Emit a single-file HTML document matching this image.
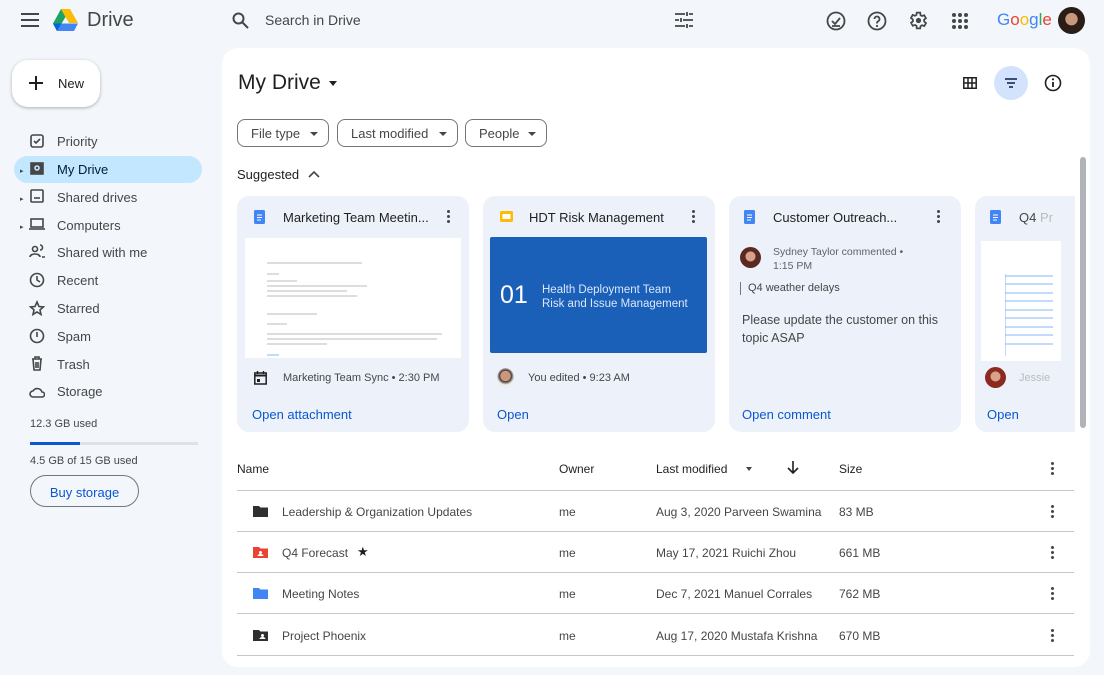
<!DOCTYPE html>
<html><head><meta charset="utf-8"><style>
*{box-sizing:border-box;margin:0;padding:0}
body{width:1104px;height:675px;background:#f3f6fb;font-family:"Liberation Sans",Arial,sans-serif;color:#1f1f1f;position:relative;overflow:hidden}
.a{position:absolute;white-space:nowrap}
.ic{position:absolute}
.nav{font-size:13px;color:#444746}
.card{position:absolute;top:196px;width:232px;height:236px;background:#edf2fa;border-radius:12px}
.ct{position:absolute;left:46px;top:14px;font-size:13px;color:#1f1f1f}
.lnk{position:absolute;left:15px;top:211px;font-size:13px;color:#0b57d0}
.row{position:absolute;left:237px;width:837px;height:41px;border-bottom:1px solid #c4c7c5;font-size:12px;color:#444746}
.row span{position:absolute;top:14px}
.chip{position:absolute;top:119px;height:28px;border:1px solid #747775;border-radius:8px;font-size:13px;color:#444746;padding:6px 0 0 13px}
.chip:after{content:"";position:absolute;right:10px;top:12px;border:4px solid transparent;border-top:4px solid #444746}
.k{position:absolute;width:3px;height:3px;background:#444746;border-radius:50%;box-shadow:0 5px 0 #444746,0 10px 0 #444746}
</style></head><body>
<!-- header -->
<svg class="ic" style="left:21px;top:13px" width="18" height="14"><path d="M0 1h18M0 7h18M0 13h18" stroke="#444746" stroke-width="2"/></svg>
<svg class="ic" style="left:53px;top:9px" width="25" height="22" viewBox="0 0 25 22"><path d="M8 0h9l8 14h-9z" fill="#fbbc04"/><path d="M8 0l4.5 8L4 22 0 14.5z" fill="#1ea362"/><path d="M4 22l4.3-7.5H25L21 22z" fill="#4285f4"/><path d="M0 14.5l4 7.5 4.3-7.5z" fill="#0066da"/><path d="M17 0l8 14h-8.5z" fill="#ea4335" opacity=".0"/></svg>
<div class="a" style="left:87px;top:9px;font-size:20px;color:#444746">Drive</div>
<svg class="ic" style="left:232px;top:12px" width="17" height="17"><circle cx="6.5" cy="6.5" r="5" fill="none" stroke="#444746" stroke-width="2"/><path d="M10 10l6 6" stroke="#444746" stroke-width="2"/></svg>
<div class="a" style="left:265px;top:12px;font-size:14px;color:#444746">Search in Drive</div>
<svg class="ic" style="left:675px;top:12px" width="18" height="16"><path d="M0 2h10M14 2h4M0 8h4M8 8h10M0 14h10M14 14h4M12 0v4M6 6v4M12 12v4" stroke="#444746" stroke-width="1.8"/></svg>
<svg class="ic" style="left:826px;top:11px" width="20" height="20"><circle cx="10" cy="10" r="8.5" fill="none" stroke="#444746" stroke-width="1.8"/><path d="M6 10l3 3 5-6M6 15h8" stroke="#444746" stroke-width="1.8" fill="none"/></svg>
<svg class="ic" style="left:867px;top:11px" width="20" height="20"><circle cx="10" cy="10" r="8.5" fill="none" stroke="#444746" stroke-width="1.8"/><path d="M7.5 8a2.5 2.5 0 1 1 3.5 2.3c-1 .5-1 1-1 2.2" stroke="#444746" stroke-width="1.8" fill="none"/><circle cx="10" cy="15" r="1.1" fill="#444746"/></svg>
<svg class="ic" style="left:908px;top:10px" width="21" height="21" viewBox="0 0 24 24"><path d="M19.4 13a7.5 7.5 0 000-2l2.1-1.6-2-3.5-2.5 1a7 7 0 00-1.7-1L15 3h-4l-.4 2.6a7 7 0 00-1.7 1l-2.5-1-2 3.5L6.6 11a7.5 7.5 0 000 2l-2.1 1.6 2 3.5 2.5-1a7 7 0 001.7 1L11 21h4l.4-2.6a7 7 0 001.7-1l2.5 1 2-3.5z" fill="none" stroke="#444746" stroke-width="2" transform="translate(-1 0)"/><circle cx="12" cy="12" r="3" fill="#444746"/></svg>
<svg class="ic" style="left:952px;top:13px" width="16" height="16"><g fill="#444746"><circle cx="2" cy="2" r="2"/><circle cx="8" cy="2" r="2"/><circle cx="14" cy="2" r="2"/><circle cx="2" cy="8" r="2"/><circle cx="8" cy="8" r="2"/><circle cx="14" cy="8" r="2"/><circle cx="2" cy="14" r="2"/><circle cx="8" cy="14" r="2"/><circle cx="14" cy="14" r="2"/></g></svg>
<div class="a" style="left:997px;top:10px;font-size:17px"><span style="color:#4285f4">G</span><span style="color:#ea4335">o</span><span style="color:#fbbc04">o</span><span style="color:#4285f4">g</span><span style="color:#34a853">l</span><span style="color:#ea4335">e</span></div>
<div class="a" style="left:1058px;top:7px;width:27px;height:27px;border-radius:50%;background:radial-gradient(circle at 50% 45%,#c9977b 0 30%,#2a1c17 32%)"></div>
<!-- sidebar -->
<div class="a" style="left:12px;top:60px;width:88px;height:47px;background:#fff;border-radius:16px;box-shadow:0 1px 3px rgba(0,0,0,.3)"></div>
<svg class="ic" style="left:29px;top:76px" width="14" height="14"><path d="M7 0v14M0 7h14" stroke="#1f1f1f" stroke-width="2"/></svg>
<div class="a" style="left:58px;top:76px;font-size:13px;color:#1f1f1f">New</div>
<div class="a" style="left:14px;top:156px;width:188px;height:27px;background:#c2e7ff;border-radius:14px"></div>
<svg class="ic" style="left:29px;top:133px" width="16" height="280" fill="none" stroke="#444746" stroke-width="1.6">
<rect x="2" y="2" width="12" height="12" rx="2"/><path d="M5 8l2 2 4-4"/>
<rect x="2" y="30" width="12" height="11" fill="#444746"/><circle cx="8" cy="35" r="2" stroke="#c2e7ff"/>
<rect x="2" y="57" width="12" height="12" rx="1"/><path d="M5 65h6"/>
<rect x="2" y="86" width="12" height="8"/><path d="M0 96h16"/>
<circle cx="6" cy="116" r="2.5"/><path d="M1 124c0-4 10-4 10 0M11 112a2 2 0 010 5M13 124h3"/>
<circle cx="8" cy="147" r="6.5"/><path d="M8 143v4l3 2"/>
<path d="M8 169l2 4.5 4.5.4-3.5 3 1 4.6L8 179l-4 2.5 1-4.6-3.5-3 4.5-.4z"/>
<circle cx="8" cy="203" r="6.5"/><path d="M8 199v5"/>
<path d="M3 226h10M6 226v-2h4v2M4 226l1 11h6l1-11M7 229v6M9 229v6"/>
<path d="M4 264a3 3 0 010-6 5 5 0 019 1 2.5 2.5 0 010 5z"/>
</svg>
<div class="a" style="left:20px;top:167px;font-size:7px;color:#444746">▸</div>
<div class="a" style="left:20px;top:195px;font-size:7px;color:#444746">▸</div>
<div class="a" style="left:20px;top:223px;font-size:7px;color:#444746">▸</div>
<div class="a nav" style="left:57px;top:134px">Priority</div>
<div class="a nav" style="left:57px;top:162px;color:#001d35">My Drive</div>
<div class="a nav" style="left:57px;top:190px">Shared drives</div>
<div class="a nav" style="left:57px;top:218px">Computers</div>
<div class="a nav" style="left:57px;top:245px">Shared with me</div>
<div class="a nav" style="left:57px;top:273px">Recent</div>
<div class="a nav" style="left:57px;top:301px">Starred</div>
<div class="a nav" style="left:57px;top:329px">Spam</div>
<div class="a nav" style="left:57px;top:357px">Trash</div>
<div class="a nav" style="left:57px;top:384px">Storage</div>
<div class="a" style="left:30px;top:418px;font-size:11px;color:#444746">12.3 GB used</div>
<div class="a" style="left:30px;top:442px;width:168px;height:3px;background:#dde3ea"></div>
<div class="a" style="left:30px;top:442px;width:50px;height:3px;background:#0b57d0"></div>
<div class="a" style="left:30px;top:455px;font-size:11px;color:#444746">4.5 GB of 15 GB used</div>
<div class="a" style="left:30px;top:475px;width:109px;height:32px;border:1px solid #747775;border-radius:16px;font-size:13px;color:#0b57d0;text-align:center;padding-top:9px">Buy storage</div>
<!-- main panel -->
<div class="a" style="left:222px;top:48px;width:868px;height:619px;background:#fff;border-radius:16px"></div>
<div class="a" style="left:238px;top:71px;font-size:21px;color:#1f1f1f">My Drive</div>
<div class="a" style="left:329px;top:81px;border:4px solid transparent;border-top:5px solid #1f1f1f"></div>
<svg class="ic" style="left:963px;top:77px" width="14" height="12"><path d="M.8.8h12.4v10.4H.8zM.8 6h12.4M5 .8v10.4M9 .8v10.4" stroke="#1f1f1f" stroke-width="1.5" fill="none"/></svg>
<div class="a" style="left:994px;top:66px;width:34px;height:34px;border-radius:50%;background:#d3e3fd"></div>
<svg class="ic" style="left:1005px;top:78px" width="12" height="10"><path d="M0 1h12M2 5h8M4 9h4" stroke="#041e49" stroke-width="1.6"/></svg>
<svg class="ic" style="left:1044px;top:74px" width="18" height="18"><circle cx="9" cy="9" r="7.5" fill="none" stroke="#1f1f1f" stroke-width="1.6"/><path d="M9 8v5" stroke="#1f1f1f" stroke-width="1.8"/><circle cx="9" cy="5.3" r="1.1" fill="#1f1f1f"/></svg>
<div class="chip" style="left:237px;width:92px">File type</div>
<div class="chip" style="left:337px;width:121px">Last modified</div>
<div class="chip" style="left:465px;width:82px">People</div>
<div class="a" style="left:237px;top:167px;font-size:13px;color:#1f1f1f">Suggested</div>
<svg class="ic" style="left:308px;top:170px" width="12" height="8"><path d="M1 7l5-5 5 5" stroke="#444746" stroke-width="1.6" fill="none"/></svg>
<!-- cards -->
<div class="card" style="left:237px">
<svg class="ic" style="left:17px;top:14px" width="11" height="14"><rect width="11" height="14" rx="1.5" fill="#4285f4"/><path d="M3 5h5M3 7.5h5M3 10h4" stroke="#fff" stroke-width="1"/></svg>
<div class="ct">Marketing Team Meetin...</div><div class="k" style="left:210px;top:14px"></div>
<div class="a" style="left:8px;top:42px;width:216px;height:120px;background:#fff"></div>
<svg class="ic" style="left:30px;top:65px" width="175" height="95"><g stroke="#bbb" stroke-width="1"><path d="M0 2h95M0 13h12M0 20h30M0 25h100M0 30h80M0 35h90M0 53h50M0 63h20M0 73h175M0 78h170M0 83h60"/><path d="M0 94h12" stroke="#8ab4f8"/></g></svg>
<svg class="ic" style="left:17px;top:175px" width="13" height="14"><rect x=".8" y="2" width="11.4" height="11" fill="none" stroke="#1f1f1f" stroke-width="1.5"/><path d="M.8 4.5h11.4" stroke="#1f1f1f" stroke-width="2"/><path d="M3.5 0v3M9.5 0v3" stroke="#1f1f1f" stroke-width="1.4"/><rect x="3" y="8" width="3" height="3" fill="#1f1f1f"/></svg>
<div class="a" style="left:46px;top:176px;font-size:11px;color:#444746">Marketing Team Sync • 2:30 PM</div>
<div class="lnk">Open attachment</div></div>
<div class="card" style="left:483px">
<svg class="ic" style="left:17px;top:15px" width="13" height="11"><rect width="13" height="11" rx="1.5" fill="#fbbc04"/><rect x="2.5" y="3" width="8" height="5" fill="#fff"/></svg>
<div class="ct">HDT Risk Management</div><div class="k" style="left:209px;top:14px"></div>
<div class="a" style="left:7px;top:41px;width:217px;height:116px;background:#1a5fb8;border-radius:2px;overflow:hidden"><div class="a" style="left:10px;top:44px;font-size:25px;color:#fff">01</div><div class="a" style="left:52px;top:46px;font-size:11.5px;color:#dbe7fb;line-height:14px">Health Deployment Team<br>Risk and Issue Management</div></div>
<div class="a" style="left:14px;top:172px;width:17px;height:20px;border-radius:50%;background:radial-gradient(circle at 50% 40%,#c9977b 0 35%,#3a2a22 37%,#eee 60%)"></div>
<div class="a" style="left:45px;top:176px;font-size:11px;color:#444746">You edited • 9:23 AM</div>
<div class="lnk" style="left:14px">Open</div></div>
<div class="card" style="left:729px">
<svg class="ic" style="left:15px;top:14px" width="11" height="14"><rect width="11" height="14" rx="1.5" fill="#4285f4"/><path d="M3 5h5M3 7.5h5M3 10h4" stroke="#fff" stroke-width="1"/></svg>
<div class="ct" style="left:44px">Customer Outreach...</div><div class="k" style="left:208px;top:14px"></div>
<div class="a" style="left:11px;top:51px;width:21px;height:21px;border-radius:50%;background:radial-gradient(circle at 50% 45%,#d9a08a 0 30%,#5a2a20 34%)"></div>
<div class="a" style="left:44px;top:49px;font-size:10.5px;color:#5f6368;line-height:14px">Sydney Taylor commented •<br>1:15 PM</div>
<div class="a" style="left:11px;top:86px;width:1px;height:13px;background:#747775"></div>
<div class="a" style="left:19px;top:86px;font-size:11px;color:#444746">Q4 weather delays</div>
<div class="a" style="left:13px;top:115px;font-size:12.5px;color:#444746;line-height:18px">Please update the customer on this<br>topic ASAP</div>
<div class="lnk" style="left:13px">Open comment</div></div>
<div class="card" style="left:975px;width:100px;border-radius:12px 0 0 12px">
<svg class="ic" style="left:15px;top:14px" width="11" height="14"><rect width="11" height="14" rx="1.5" fill="#4285f4"/><path d="M3 5h5M3 7.5h5M3 10h4" stroke="#fff" stroke-width="1"/></svg>
<div class="ct" style="left:44px;color:#444">Q4 <span style="color:#bbb">Pr</span></div>
<div class="a" style="left:6px;top:45px;width:80px;height:120px;background:#fff"></div>
<svg class="ic" style="left:30px;top:78px" width="50" height="82"><g stroke="#8ab4f8" stroke-width="1"><path d="M0 2h48M0 10h48M0 19h48M0 27h48M0 36h48M0 44h48M0 53h48M0 61h48M0 70h48M0 0v82"/></g></svg>
<div class="a" style="left:10px;top:171px;width:21px;height:21px;border-radius:50%;background:radial-gradient(circle at 50% 45%,#d9a08a 0 30%,#8a2a20 34%)"></div>
<div class="a" style="left:44px;top:176px;font-size:11px;color:#bbb">Jessie</div>
<div class="lnk" style="left:12px">Open</div></div>
<div class="a" style="left:1075px;top:196px;width:15px;height:240px;background:#fff"></div>
<div class="a" style="left:1080px;top:157px;width:6px;height:271px;background:#b0b3b8;border-radius:3px"></div>
<!-- list -->
<div class="a" style="left:237px;top:490px;width:837px;height:1px;background:#c4c7c5"></div>
<div class="a" style="left:237px;top:462px;font-size:12px;color:#1f1f1f">Name</div>
<div class="a" style="left:559px;top:462px;font-size:12px;color:#1f1f1f">Owner</div>
<div class="a" style="left:656px;top:462px;font-size:12px;color:#1f1f1f">Last modified</div>
<div class="a" style="left:746px;top:467px;border:3.5px solid transparent;border-top:4px solid #444746"></div>
<svg class="ic" style="left:787px;top:461px" width="12" height="14"><path d="M6 0v12M1 7l5 5 5-5" stroke="#1f1f1f" stroke-width="1.6" fill="none"/></svg>
<div class="a" style="left:839px;top:462px;font-size:12px;color:#1f1f1f">Size</div>
<div class="k" style="left:1051px;top:462px"></div>
<div class="row" style="top:491px"><svg class="ic" style="left:16px;top:14px" width="15" height="12"><path d="M0 1h6l1.5 1.5H15V12H0z" fill="#303030"/></svg><span style="left:45px">Leadership &amp; Organization Updates</span><span style="left:322px">me</span><span style="left:419px">Aug 3, 2020 Parveen Swamina</span><span style="left:602px">83 MB</span><div class="k" style="left:814px;top:14px"></div></div>
<div class="row" style="top:532px"><svg class="ic" style="left:16px;top:14px" width="15" height="12"><path d="M0 1h6l1.5 1.5H15V12H0z" fill="#ea4335"/><circle cx="7.5" cy="6.5" r="1.5" fill="#fff"/><path d="M4.5 10a3 2 0 016 0z" fill="#fff"/></svg><span style="left:45px">Q4 Forecast</span><span style="left:120px;top:12px;font-size:13px;color:#1f1f1f">★</span><span style="left:322px">me</span><span style="left:419px">May 17, 2021 Ruichi Zhou</span><span style="left:602px">661 MB</span><div class="k" style="left:814px;top:14px"></div></div>
<div class="row" style="top:573px"><svg class="ic" style="left:16px;top:14px" width="15" height="12"><path d="M0 1h6l1.5 1.5H15V12H0z" fill="#4285f4"/></svg><span style="left:45px">Meeting Notes</span><span style="left:322px">me</span><span style="left:419px">Dec 7, 2021 Manuel Corrales</span><span style="left:602px">762 MB</span><div class="k" style="left:814px;top:14px"></div></div>
<div class="row" style="top:615px"><svg class="ic" style="left:16px;top:14px" width="15" height="12"><path d="M0 1h6l1.5 1.5H15V12H0z" fill="#303030"/><circle cx="9.5" cy="6.5" r="1.5" fill="#fff"/><path d="M6.5 10a3 2 0 016 0z" fill="#fff"/></svg><span style="left:45px">Project Phoenix</span><span style="left:322px">me</span><span style="left:419px">Aug 17, 2020 Mustafa Krishna</span><span style="left:602px">670 MB</span><div class="k" style="left:814px;top:14px"></div></div>
</body></html>
